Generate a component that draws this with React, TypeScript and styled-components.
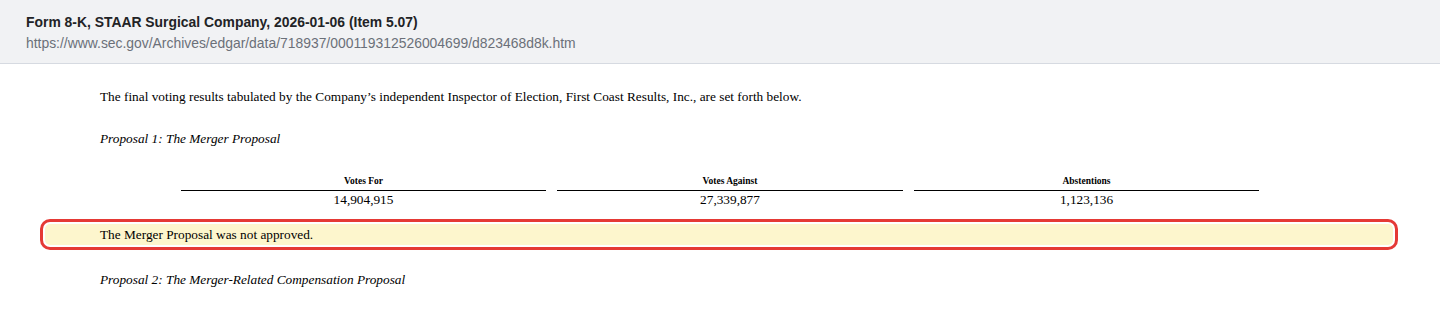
import styled, { createGlobalStyle } from "styled-components";

const GlobalStyle = createGlobalStyle`
  html, body {
    margin: 0;
    padding: 0;
    background: #ffffff;
  }
`;

type Result = { label: string; value: string };

const results: Result[] = [
  { label: "Votes For", value: "14,904,915" },
  { label: "Votes Against", value: "27,339,877" },
  { label: "Abstentions", value: "1,123,136" },
];

export default function App() {
  return (
    <>
      <GlobalStyle />
      <Page>
        <Header>
          <Title>Form 8-K, STAAR Surgical Company, 2026-01-06 (Item 5.07)</Title>
          <Url>https://www.sec.gov/Archives/edgar/data/718937/000119312526004699/d823468d8k.htm</Url>
        </Header>

        <Doc>
          <Paragraph>
            The final voting results tabulated by the Company’s independent Inspector of Election, First
            Coast Results, Inc., are set forth below.
          </Paragraph>
          <ProposalTitle>Proposal 1: The Merger Proposal</ProposalTitle>

          <VoteTable>
            {results.map((r) => (
              <VoteCol key={r.label}>
                <VoteHead>{r.label}</VoteHead>
                <VoteValue>{r.value}</VoteValue>
              </VoteCol>
            ))}
          </VoteTable>

          <Highlight>
            <HighlightText>The Merger Proposal was not approved.</HighlightText>
          </Highlight>

          <ProposalTitle $top={26}>Proposal 2: The Merger-Related Compensation Proposal</ProposalTitle>
        </Doc>
      </Page>
    </>
  );
}

const Page = styled.div`
  width: 1440px;
  min-height: 314px;
  background: #ffffff;
`;

const Header = styled.header`
  height: 64px;
  box-sizing: border-box;
  padding: 13px 26px 0;
  background: #f1f2f4;
  border-bottom: 1px solid #d6dae1;
  font-family: "Liberation Sans", Arial, sans-serif;
`;

const Title = styled.div`
  font-size: 13.9px;
  font-weight: 700;
  line-height: 18px;
  color: #222326;
`;

const Url = styled.div`
  margin-top: 3px;
  font-size: 13.9px;
  line-height: 18px;
  color: #6b7079;
`;

const Doc = styled.main`
  padding-top: 24px;
  font-family: "Liberation Serif", "Times New Roman", serif;
  font-size: 13.3px;
  color: #000000;
`;

const Paragraph = styled.p`
  margin: 0;
  padding: 0 100px;
  line-height: 18px;
`;

const ProposalTitle = styled.p<{ $top?: number }>`
  margin: ${(p) => p.$top ?? 24}px 0 0;
  padding: 0 100px;
  font-style: italic;
  line-height: 18px;
`;

const VoteTable = styled.div`
  margin-top: 27px;
  display: grid;
  grid-template-columns: 365px 346px 345px;
  column-gap: 11px;
  justify-content: center;
`;

const VoteCol = styled.div`
  display: flex;
  flex-direction: column;
  align-items: stretch;
  text-align: center;
`;

const VoteHead = styled.div`
  font-size: 9.5px;
  font-weight: 700;
  line-height: 12px;
  padding-bottom: 3px;
  border-bottom: 1.3px solid #000000;
`;

const VoteValue = styled.div`
  font-size: 13.3px;
  line-height: 17px;
`;

const Highlight = styled.div`
  margin: 16px 47px 0 45px;
  background: #fdf6cd;
  border-radius: 5px;
  box-shadow: 0 0 0 2px #ffffff, 0 0 0 5px #e53935;
`;

const HighlightText = styled.p`
  margin: 0;
  padding: 2px 55px 1px;
  line-height: 18px;
`;
